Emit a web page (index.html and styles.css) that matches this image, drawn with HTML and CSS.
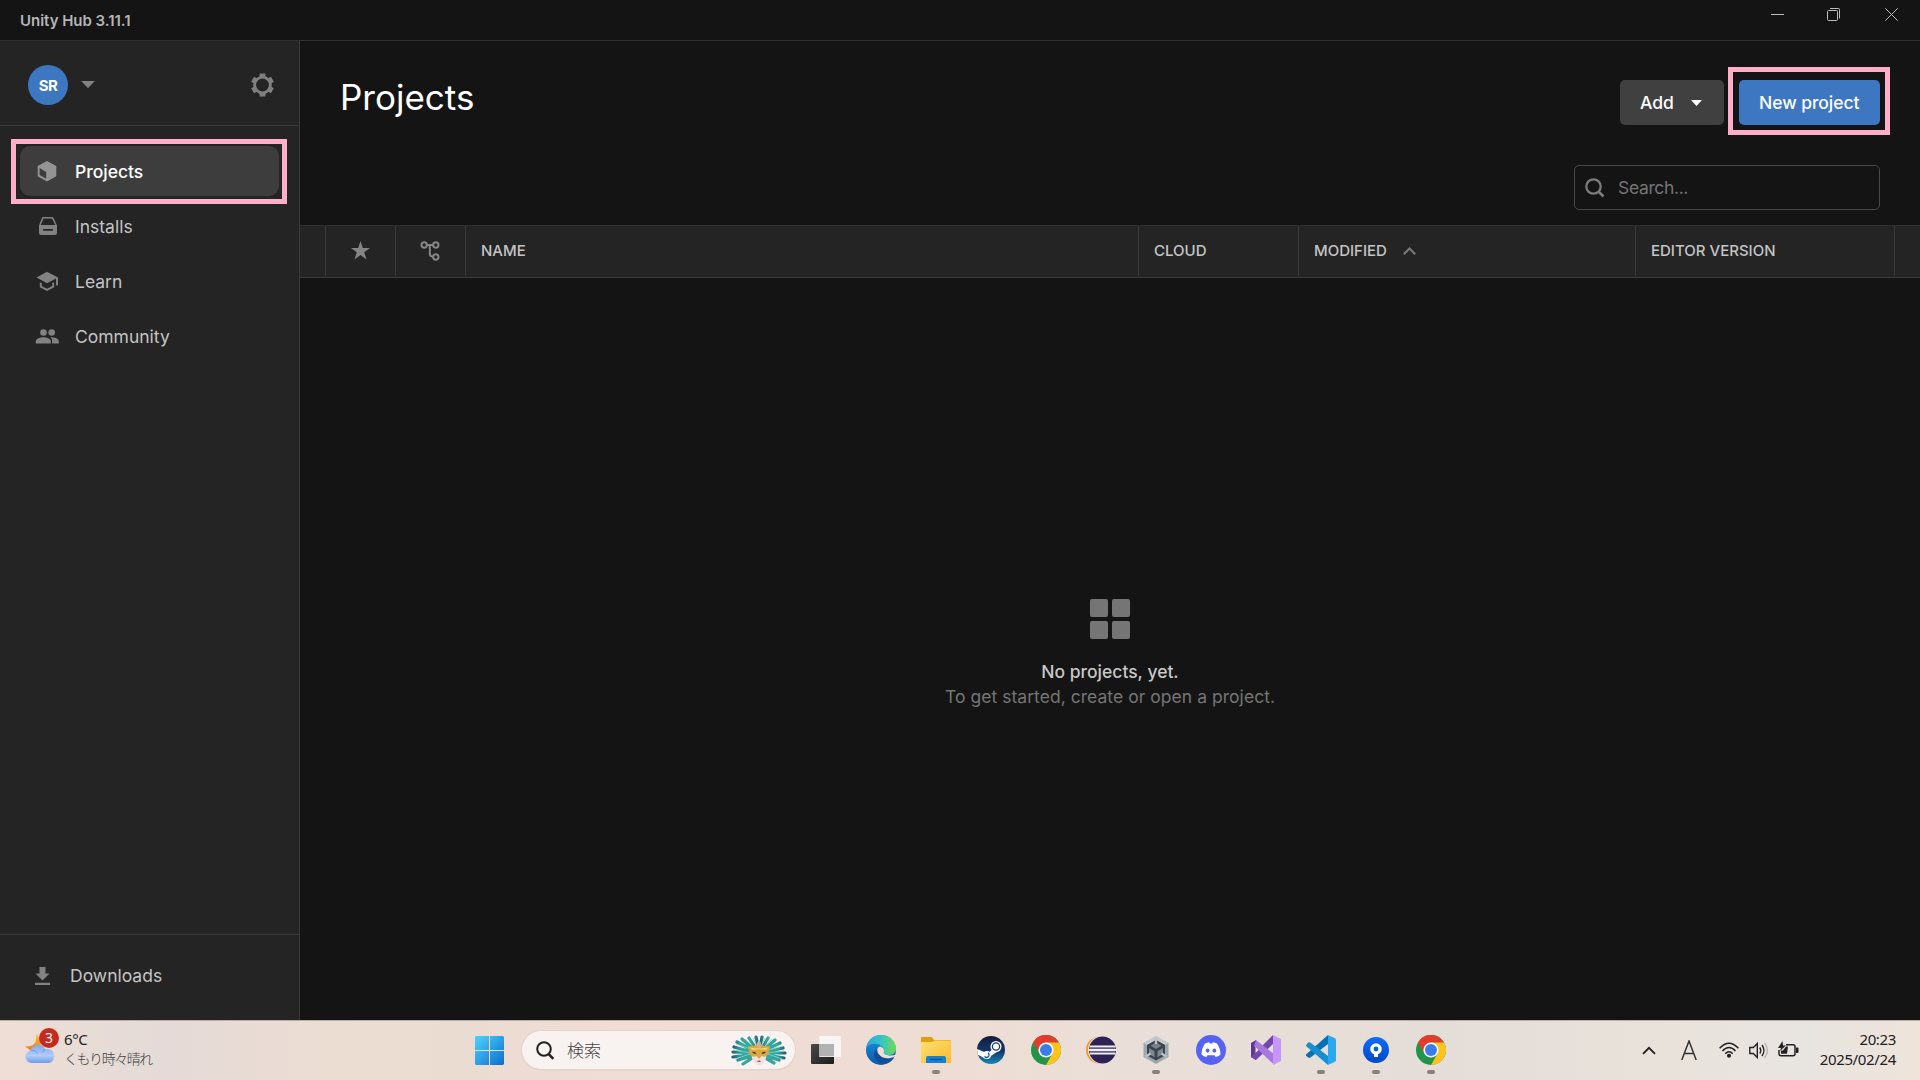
FILE: index.html
```html
<!DOCTYPE html>
<html lang="ja">
<head>
<meta charset="utf-8">
<title>Unity Hub 3.11.1</title>
<link rel="stylesheet" href="styles.css">
</head>
<body>
<svg width="0" height="0" class="defs" aria-hidden="true">
  <defs>
    <linearGradient id="win" x1="0" y1="0" x2="1" y2="1"><stop offset="0" stop-color="#4fd3fb"/><stop offset="1" stop-color="#0a6fd0"/></linearGradient>
    <linearGradient id="edgeTop" x1="0" y1="0" x2="1" y2="0"><stop offset="0" stop-color="#2aa5e0"/><stop offset=".5" stop-color="#34c6c8"/><stop offset="1" stop-color="#6cdc4c"/></linearGradient>
    <linearGradient id="edgeLow" x1="0" y1="0" x2="0" y2="1"><stop offset="0" stop-color="#1c94e0"/><stop offset="1" stop-color="#0c59a4"/></linearGradient>
    <linearGradient id="folder" x1="0" y1="0" x2="1" y2="1"><stop offset="0" stop-color="#ffe07a"/><stop offset="1" stop-color="#fbbb24"/></linearGradient>
    <linearGradient id="steam" x1="0" y1="0" x2="0" y2="1"><stop offset="0" stop-color="#171a3a"/><stop offset=".55" stop-color="#123a6b"/><stop offset="1" stop-color="#1387b8"/></linearGradient>
    <linearGradient id="dark" x1="0" y1="0" x2="1" y2="1"><stop offset="0" stop-color="#4a4a48"/><stop offset="1" stop-color="#1d1d1b"/></linearGradient>
    <linearGradient id="cloud" x1="0" y1="0" x2="0" y2="1"><stop offset="0" stop-color="#7fa8ee"/><stop offset=".6" stop-color="#b1cdf9"/><stop offset="1" stop-color="#6d9be8"/></linearGradient>
    <linearGradient id="moon" x1="0" y1="0" x2="0" y2="1"><stop offset="0" stop-color="#f8bb33"/><stop offset="1" stop-color="#ec8518"/></linearGradient>
    <linearGradient id="feather" x1="0" y1="0" x2="1" y2="0"><stop offset="0" stop-color="#245f78"/><stop offset=".3" stop-color="#35a69e"/><stop offset=".7" stop-color="#35a69e"/><stop offset="1" stop-color="#245f78"/></linearGradient>
    <linearGradient id="source" x1="0" y1="0" x2="0" y2="1"><stop offset="0" stop-color="#0a6bff"/><stop offset="1" stop-color="#0347c8"/></linearGradient>
    <symbol id="chrome" viewBox="0 0 30 30">
      <circle cx="15" cy="15" r="15" fill="#219447"/>
      <path d="M2 7.500A15 15 0 0 1 28 7.500H15L8.600 18.800Z" fill="#e33b2e"/>
      <path d="M28 7.500A15 15 0 0 1 15 30L21.400 18.800 15 7.500Z" fill="#fcc31c"/>
      <circle cx="15" cy="15" r="7.600" fill="#fff"/><circle cx="15" cy="15" r="6" fill="#3b7ced"/>
    </symbol>
  </defs>
</svg>

<header class="titlebar">
  <span class="app-title">Unity Hub 3.11.1</span>
  <div class="window-controls">
    <svg width="13" height="13" viewBox="0 0 13 13"><path d="M0 6.500h13"/></svg>
    <svg width="13" height="13" viewBox="0 0 13 13"><rect x=".5" y="2.500" width="10" height="10" rx="1"/><path d="M3 .5h8.500q1 0 1 1V10.500"/></svg>
    <svg width="13" height="13" viewBox="0 0 13 13"><path d="M.3.3l12.400 12.400M12.700.3L.3 12.700"/></svg>
  </div>
</header>

<div class="app">
  <aside class="sidebar">
    <div class="account">
      <div class="avatar">SR</div>
      <svg class="account-caret" width="14" height="7" viewBox="0 0 14 7"><path d="M0 0h14L7 7z" fill="#828282"/></svg>
      <svg class="gear" width="23" height="24" viewBox="0 0 23 24"><g fill="none" stroke="#808080"><circle cx="11.500" cy="12" r="7.900" stroke-width="2.900"/><path d="M11.500.6v3M11.500 20.400v3M1.600 6.300l2.600 1.500M18.800 16.200l2.600 1.500M1.600 17.700l2.600-1.500M18.800 7.800l2.600-1.500" stroke-width="5.800"/></g></svg>
    </div>
    <nav class="nav">
      <a class="nav-item active">
        <svg width="24" height="24" viewBox="0 0 24 24"><path fill="#949494" fill-rule="evenodd" d="M12 2l9.300 5v10.200L12 22.400l-9.300-5.200V7zM4.600 9v7l6.600 3.700v-6.600z"/></svg>
        <span>Projects</span>
      </a>
      <a class="nav-item">
        <svg width="24" height="24" viewBox="0 0 24 24"><path fill="#828282" fill-rule="evenodd" d="M8 3h9q1.200 0 1.700 1.200L22 11.500V19q0 2-2 2H6q-2 0-2-2v-7.500L6.800 4.200Q7.200 3 8 3zM8.500 4.600L5.800 11h14.500L17 4.600zM9 15q-1 0-1 .9t1 .9h8q1 0 1-.9t-1-.9z"/></svg>
        <span>Installs</span>
      </a>
      <a class="nav-item">
        <svg width="24" height="24" viewBox="0 0 24 24"><path fill="#828282" d="M12 2.800l11 5.600v7.600q-.9 1-2 0V9.500L12 14.200 1.500 8.400z"/><path d="M5.800 13.700v4l6.200 3.200 6.200-3.200v-4" fill="none" stroke="#828282" stroke-width="1.900"/></svg>
        <span>Learn</span>
      </a>
      <a class="nav-item">
        <svg width="24" height="24" viewBox="0 0 24 24"><g fill="#828282" transform="translate(.3 .5)"><circle cx="8.200" cy="8" r="3.300"/><path d="M.5 19v-2.300C.5 14 5.500 12.800 8.200 12.800S15.500 14 15.500 16.700V19z"/><circle cx="16.400" cy="8" r="3.300"/><path d="M16 12.800c3 0 7.500 1.200 7.500 3.900V19h-6.600v-2.300q0-2.300-1.800-3.900z"/></g></svg>
        <span>Community</span>
      </a>
    </nav>
    <div class="downloads">
      <svg width="15" height="18" viewBox="0 0 15 18"><path fill="#828282" d="M4.500 0h6v6.500h4L7.500 13.500.5 6.500h4zM0 15.800h15V18H0z"/></svg>
      <span>Downloads</span>
    </div>
    <div class="marker marker-nav"></div>
  </aside>

  <main class="main">
    <div class="page-head">
      <h1>Projects</h1>
      <div class="actions">
        <button class="btn btn-add">Add<svg width="11" height="6" viewBox="0 0 11 6"><path d="M0 0h11L5.500 6z" fill="#fff"/></svg></button>
        <button class="btn btn-new">New project</button>
      </div>
      <div class="marker marker-new"></div>
    </div>
    <div class="search-row">
      <div class="search">
        <svg width="20" height="20" viewBox="0 0 20 20"><circle cx="8.500" cy="8.500" r="7.200" fill="none" stroke="#7b7b7b" stroke-width="2.300"/><path d="M13.500 13.500l5 5" stroke="#7b7b7b" stroke-width="2.700"/></svg>
        <span>Search...</span>
      </div>
    </div>
    <div class="table-head">
      <div class="cell"></div>
      <div class="cell center"><svg width="19" height="19" viewBox="0 0 19 19"><path fill="#858585" d="M9.500 0l2.300 6.900H19l-5.800 4.400 2.300 7.200-6-4.400-6 4.400 2.300-7.200L0 6.900h7.200z"/></svg></div>
      <div class="cell center"><svg width="20" height="20" viewBox="0 0 20 20" fill="none" stroke="#858585" stroke-width="2"><circle cx="4.200" cy="4" r="2.700"/><circle cx="15.800" cy="4" r="2.700"/><circle cx="15.800" cy="16" r="2.700"/><path d="M7 4h6M9.800 4v8.500q0 3 3.200 3.200" stroke-width="2"/></svg></div>
      <div class="cell">NAME</div>
      <div class="cell">CLOUD</div>
      <div class="cell">MODIFIED<svg class="sort" width="13" height="8" viewBox="0 0 13 8"><path d="M.8 7.200l5.700-5.700 5.700 5.700" fill="none" stroke="#7b7b7b" stroke-width="2"/></svg></div>
      <div class="cell">EDITOR VERSION</div>
      <div class="cell"></div>
    </div>
    <div class="empty">
      <div class="tiles"><i></i><i></i><i></i><i></i></div>
      <strong>No projects, yet.</strong>
      <span>To get started, create or open a project.</span>
    </div>
  </main>
</div>

<footer class="taskbar">
  <div class="weather">
    <div class="weather-icon">
      <svg width="31" height="30" viewBox="0 0 31 30"><path d="M11 0q8 8 3 16H5L0 12.500Q13 13 11 0z" fill="url(#moon)"/><path d="M6.500 29a6.300 6.300 0 0 1-.8-12.500 8 8 0 0 1 14.800-1.200A7 7 0 1 1 24 29z" fill="url(#cloud)"/><path d="M5.500 16.500q5-1 7 3M20.500 15.500q-2 .8-3 3" fill="none" stroke="#6f9ae6"/></svg>
      <span class="badge">3</span>
    </div>
    <div class="weather-text"><span>6°C</span><span class="sub">くもり時々晴れ</span></div>
  </div>
  <div class="dock">
    <svg class="start" width="29" height="29" viewBox="0 0 29 29"><path fill="url(#win)" d="M1 0h13v14H0V1zM15 0h13l1 1v13H15zM0 15h14v14H1l-1-1zM15 15h14v13l-1 1H15z"/></svg>
    <div class="task-search">
      <svg width="18" height="19" viewBox="0 0 18 19" fill="none" stroke="#222"><circle cx="8" cy="8" r="6.800" stroke-width="2"/><path d="M12.500 12.800l4.800 5" stroke-width="2.500"/></svg>
      <span>検索</span>
      <svg class="mask" width="58" height="32" viewBox="0 0 58 32">
        <g fill="none" stroke="url(#feather)" stroke-width="3.200" stroke-linecap="round"><path d="M29 18L26 3M28 18L19 4M27 18L12 5M26 18L7 8M25 19L4 13M25 19L3 18M25 20L3 23M26 21L8 26M27 21L13 30"/><path d="M29 18L32 3M30 18L38 4M31 18L45 6M31 18L50 9M31 19L53 14M31 19L55 19M31 20L54 24M31 21L49 26M30 21L44 29"/></g>
        <path d="M23 4l4 8M35 4l-4 8M15 5l10 9M42 5l-9 9M6 10l18 6M52 12l-17 5M3 16l18 3M54 17l-17 2M5 25l15-5M52 25l-14-5" fill="none" stroke="#8bd3c8" stroke-width=".8"/>
        <path d="M20.500 17q8.500-2 17 0l-2 9q-3 5.500-6.500 5.500t-6.500-5.500z" fill="#efe4e4"/>
        <path d="M18 12q6 1 8.500-1.500L29 8l2.500 2.500Q34 13 40 12l-1.500 8q-2.500 4-7 2L29 25l-2.500-3q-4.500 2-7-2z" fill="#dca83d"/><path d="M20 13.500q9 2 18 0l-2 2.500q-7-1.500-14 0z" fill="#f8d672"/>
        <path d="M22 18q2.500-1 4.500 1.500-3 .8-4.500-1.500zM36 18q-2.500-1-4.500 1.500 3 .8 4.500-1.500z" fill="#293741"/><path d="M26.800 27q2.200-1.200 4.400 0-2.200 2.200-4.400 0z" fill="#d32735"/><ellipse cx="29" cy="10.500" rx="2" ry="3.500" fill="#c9b19a"/>
      </svg>
    </div>
    <div class="task"><svg width="30" height="30" viewBox="0 0 30 30"><rect y="9" width="23" height="20" rx="1" fill="url(#dark)"/><rect x="8" y="1" width="22" height="21" rx="1" fill="#f8f8f8" opacity=".9"/><path d="M8 9h15v12H8z" fill="#b2b2b2"/></svg></div>
    <div class="task"><svg width="30" height="30" viewBox="0 0 30 30"><circle cx="15" cy="15" r="15" fill="url(#edgeLow)"/><path d="M.5 12C2 4.500 8 0 15 0c8.500 0 15 6 15 13.500 0 4-3 6.500-7 6.500-4 0-6.500-1.500-5.500-3.200 2-2.500-.5-5.300-4.500-7.300Q6 7 .5 12z" fill="url(#edgeTop)"/><path d="M12 13q-6 4-3 10 4 7 12 5 4-1 7-5-7 2.500-12-1t-4-9z" fill="#0f4f99"/><path d="M17.500 13.500q-4-4-6 0-1 4 2 6.500 4 4 10.500 3 4-.5 7-2.500V19q-4 2-9 1.200-6-1-3.700-4z" fill="#eeded6"/></svg></div>
    <div class="task open"><svg width="30" height="30" viewBox="0 0 30 30"><path d="M0 3q0-1 1-1h9q1 0 1.500.7L13 5h16q1 0 1 1v6H0z" fill="#e0a008"/><path d="M0 8q0-1 1-1h10l3-1.500h15q1 0 1 1V28H0z" fill="url(#folder)"/><path d="M5 28v-5q0-2 2-2h16q2 0 2 2v5z" fill="#1581d3"/><path d="M9 24.500h12" stroke="#0d4d94" stroke-width="1.300"/></svg></div>
    <div class="task"><svg width="30" height="30" viewBox="0 0 30 30"><circle cx="15" cy="15" r="14" fill="url(#steam)"/><path d="M1 14l11 4.500 4.500-4.500L19 10l5 5-8.500 5.500L9 23.500l-7.500-4z" fill="#fff"/><circle cx="20" cy="11.500" r="5.500" fill="#fff"/><circle cx="20" cy="11.500" r="3.600" fill="#fff" stroke="#173d6e" stroke-width="1.300"/><circle cx="11" cy="20" r="4" fill="#fff"/><path d="M8.500 21.500q2 2 4 0 1.500-2-.5-3.700" fill="none" stroke="#1b5e91" stroke-width="1.200"/></svg></div>
    <div class="task"><svg width="30" height="30"><use href="#chrome"/></svg></div>
    <div class="task"><svg width="30" height="30" viewBox="0 0 30 30"><circle cx="13.300" cy="15" r="13.300" fill="#f4962a"/><circle cx="16" cy="15" r="14" fill="#eee3dc"/><circle cx="16.500" cy="15" r="13.500" fill="#2c2255"/><path d="M3.700 11.500h25.800M3 15h27M3.700 18.500h25.800" stroke="#f0f0f7" stroke-width="2"/><path d="M4 13.200h25M4 16.800h25" stroke="#8175a9" stroke-width="1"/></svg></div>
    <div class="task open"><svg width="30" height="30" viewBox="0 0 30 30"><path d="M15 1l12.500 7v14L15 29 2.500 22V8z" fill="#9da7ae"/><path d="M15 1l12.500 7L24 10 15 5l-9 5-3.500-2z" fill="#c5ccd1"/><path d="M15 5l9 5v10.500L15 25.500l-9-5V10z" fill="#3b444b"/><path d="M15 7.500l5.500 3.200L15 14l-5.500-3.300z" fill="#78838b"/><path d="M8 13l5.500 3.200v6L8 19zM22 13l-5.500 3.200v6L22 19z" fill="#7d888f"/><path d="M13.800 2.500h2.400V9h-2.400zM4 20.500l5-3 1.200 2-5 3zM26 20.500l-5-3-1.200 2 5 3z" fill="#bac3c9"/></svg></div>
    <div class="task"><svg width="30" height="30" viewBox="0 0 30 30"><circle cx="15" cy="15" r="15" fill="#5663f2"/><path d="M9 8.500q2-1 4-1.300l.8 1.300h2.400l.8-1.300q2 .3 4 1.300 3.500 5 3.500 11-2.200 2-5 2.500l-1-1.800h-7l-1 1.800q-2.800-.5-5-2.500Q5.500 13.500 9 8.500z" fill="#fff"/><ellipse cx="11.600" cy="15.600" rx="1.900" ry="2.100" fill="#5663f2"/><ellipse cx="18.400" cy="15.600" rx="1.900" ry="2.100" fill="#5663f2"/></svg></div>
    <div class="task"><svg width="30" height="30" viewBox="0 0 30 30"><path d="M0 8l5-3v20l-5-3z" fill="#5c3a91"/><path d="M0 22L22 0v9L5 25z" fill="#7248ac"/><path d="M5 5l18 14v10.500L3 11z" fill="#a678df"/><path d="M22 0l8 4v22l-8 4z" fill="#c896fb"/><path d="M4.500 12v6l3-3z" fill="#eaded9"/></svg></div>
    <div class="task open"><svg width="30" height="30" viewBox="0 0 30 30"><path d="M0 19.500L22 0v9L4.500 22.500q-1.500 1-3-.4L0 20.500z" fill="#0870b5"/><path d="M0 10.500L1.500 8Q3 6.500 4.500 7.800L22 21v9L0 11z" fill="#168fd1"/><path d="M22 0l7 3.300q1 .6 1 1.700v20q0 1.200-1 1.700L22 30z" fill="#2aa9ee"/></svg></div>
    <div class="task open"><svg width="30" height="30" viewBox="0 0 30 30"><circle cx="15" cy="15" r="13" fill="url(#source)"/><circle cx="15" cy="14" r="4.100" fill="none" stroke="#fff" stroke-width="3.400"/><path d="M13 17h4v5h-4z" fill="#fff"/></svg></div>
    <div class="task open"><svg width="30" height="30"><use href="#chrome"/></svg></div>
  </div>
  <div class="tray">
    <svg width="14" height="9" viewBox="0 0 14 9"><path d="M1 7.800l6-6 6 6" fill="none" stroke="#222" stroke-width="1.900"/></svg>
    <svg class="ime" width="16" height="20" viewBox="0 0 16 20"><path d="M.8 20L8 1l7.200 19M3.300 13.500h9.400" fill="none" stroke="#333" stroke-width="1.500"/></svg>
    <svg class="wifi" width="20" height="16" viewBox="0 0 20 16" fill="none" stroke="#222" stroke-width="1.500"><path d="M.6 6.200q9.400-10 18.800 0M3.500 9q6.500-7 13 0M6.300 11.700q3.700-4 7.400 0"/><circle cx="10" cy="13.800" r="1.300" fill="#222"/></svg>
    <svg class="volume" width="20" height="17" viewBox="0 0 20 17" fill="none" stroke="#222" stroke-width="1.400"><path d="M.8 5.500h3.500l4-4v14l-4-4H.8z"/><path d="M10.800 5.500q2 3 0 6M13 3q4 5.500 0 11"/><path d="M15.500 1q6 7.500 0 15" stroke="#bbb5b2"/></svg>
    <svg class="battery" width="21" height="16" viewBox="0 0 21 16"><path d="M8 3.800h7q2 0 2 2v7q0 2-2 2H3q-2 0-2-2V9" fill="none" stroke="#222" stroke-width="1.500"/><path d="M18 6.500h1.500q1 0 1 1v3.500q0 1-1 1H18zM3 12.800V9.500h2l3-4h2l-1 7.300zM4.500 0L0 7h3L2 10l6-5.500H5z" fill="#222"/></svg>
    <div class="clock"><span>20:23</span><span>2025/02/24</span></div>
  </div>
</footer>
</body>
</html>
```
FILE: styles.css
```css
* { box-sizing: border-box; }

body {
  margin: 0;
  width: 1920px;
  height: 1080px;
  overflow: hidden;
  display: grid;
  grid-template-rows: 41px 979px 60px;
  background: #141414;
  color: #c4c4c4;
  font-family: Inter, "Liberation Sans", sans-serif;
  font-size: 17.5px;
}

svg { display: block; flex: none; }
.defs { position: absolute; }

.titlebar {
  display: flex;
  justify-content: space-between;
  align-items: center;
  padding: 0 22px 0 20px;
  border-bottom: 1px solid #303030;
}
.app-title { font-size: 15px; font-weight: 600; letter-spacing: -.03px; color: #b5b5b5; }
.window-controls { display: flex; gap: 45px; align-self: flex-start; padding-top: 8px; }
.window-controls svg { fill: none; stroke: #bcbcbc; stroke-width: 1; }
.window-controls svg:first-child { margin-right: -2px; }

.app { display: grid; grid-template-columns: 300px 1fr; }

.sidebar {
  position: relative;
  display: flex;
  flex-direction: column;
  background: #242424;
  border-right: 1px solid #3a3a3a;
}
.account {
  display: flex;
  align-items: center;
  height: 85px;
  padding: 3px 25px 0 28px;
  border-bottom: 1px solid #3a3a3a;
}
.avatar {
  width: 40px;
  height: 40px;
  border-radius: 50%;
  background: #3d77c2;
  color: #fff;
  font-size: 15px;
  font-weight: 700;
  line-height: 41px;
  text-align: center;
  letter-spacing: -.5px;
}
.account-caret { margin-left: 13px; }
.gear { margin-left: auto; }

.nav { flex: 1; display: flex; flex-direction: column; gap: 5px; padding: 20px; }
.nav-item {
  display: flex;
  align-items: center;
  gap: 16px;
  height: 50px;
  padding-left: 15px;
  border-radius: 10px;
}
.nav-item.active { background: #3d3d3d; color: #fff; font-weight: 500; }
.downloads {
  display: flex;
  align-items: center;
  gap: 20px;
  height: 86px;
  padding: 0 0 4px 35px;
  border-top: 1px solid #3a3a3a;
}

.marker { position: absolute; border: 5px solid #ffaec9; pointer-events: none; }
.marker-nav { left: 11px; top: 98px; width: 276px; height: 65px; }
.marker-new { right: 30px; top: 26px; width: 162px; height: 68px; }

.main { display: flex; flex-direction: column; }
.page-head {
  position: relative;
  display: flex;
  justify-content: space-between;
  height: 124px;
  padding: 34px 40px 0;
}
h1 { margin: 0; color: #fff; font-size: 35px; font-weight: 400; line-height: 45px; }
.actions { display: flex; gap: 15px; padding-top: 5px; }
.btn {
  display: flex;
  align-items: center;
  height: 45px;
  padding: 0 20px;
  border: 0;
  border-radius: 5px;
  color: #fff;
  font: 500 17.5px Inter, sans-serif;
}
.btn-add { width: 104px; gap: 17px; background: #404040; }
.btn-new { width: 141px; background: #3d77c2; white-space: nowrap; letter-spacing: -.05px; }

.search-row { display: flex; justify-content: flex-end; height: 60px; padding-right: 40px; }
.search {
  display: flex;
  align-items: center;
  gap: 13px;
  width: 306px;
  height: 45px;
  padding-left: 10px;
  border: 1px solid #484848;
  border-radius: 5px;
  color: #757575;
}
.search span { letter-spacing: -.35px; }

.table-head {
  display: grid;
  grid-template-columns: 26px 70px 70px 673px 160px 337px 259px 1fr;
  height: 53px;
  padding-bottom: 1px;
  border-top: 1px solid #303030;
  border-bottom: 1px solid #3a3a3a;
  background: #242424;
}
.cell {
  display: flex;
  align-items: center;
  padding: 0 0 2px 15px;
  border-right: 1px solid #3a3a3a;
  font-size: 15px;
  font-weight: 500;
}
.cell:last-child { border-right: 0; }
.cell.center { justify-content: center; padding: 0 1px 0 0; }
.cell.center:nth-child(2) { padding-bottom: 2px; }
.sort { margin-left: 16px; margin-top: 2px; }

.empty {
  flex: 1;
  display: flex;
  flex-direction: column;
  align-items: center;
  padding-top: 321px;
  color: #757575;
  line-height: 25px;
}
.empty span { letter-spacing: .04px; }
.tiles { display: grid; grid-template-columns: 18px 18px; gap: 4px; margin-bottom: 20px; }
.tiles i { width: 18px; height: 18px; border-radius: 2px; background: #757575; }
.empty strong { font-weight: 500; color: #c8c8c8; }

.taskbar {
  display: grid;
  grid-template-columns: 475px 1fr 280px;
  border-top: 1px solid #b9aea8;
  background: linear-gradient(90deg, #efded5 0, #e5dbd7 7%, #e5dad7 9%, #ecddd3 17%, #ebdcd2 25%, #f0ddd5 32%, #eeddd4 50%, #e9dfd8 60%, #e5ddd7 75%, #e9e3dc 88%, #e8e4e0 94%, #eee4da 100%);
  color: #222;
  font-family: "Noto Sans", "Noto Sans CJK JP", sans-serif;
}
.weather { display: flex; padding: 6px 0 0 25px; gap: 8px; }
.weather-icon { position: relative; width: 31px; padding-top: 7px; }
.badge {
  position: absolute;
  left: 14px;
  top: 1px;
  width: 20px;
  height: 20px;
  border-radius: 50%;
  background: #c62a1c;
  color: #fff;
  font-size: 14px;
  line-height: 20px;
  text-align: center;
}
.weather-text { display: flex; flex-direction: column; font-size: 15px; line-height: 20px; padding-top: 2px; letter-spacing: -.4px; }
.weather-text .sub { margin-top: -1px; font-family: "Noto Sans CJK JP", sans-serif; font-size: 14px; font-weight: 300; color: #444; letter-spacing: -1.45px; white-space: nowrap; }

.dock { display: flex; align-items: center; padding-bottom: 1px; }
.start { margin-top: 1px; }
.task-search {
  display: flex;
  align-items: center;
  width: 273px;
  height: 38px;
  margin: 0 3px 0 18px;
  padding: 0 7px 0 14px;
  border-radius: 19px;
  background: #f8f3f1;
  box-shadow: 0 0 0 1px #e4d3ca, 0 1px 1px #bfafaa;
}
.task-search span { margin: -2px 0 0 13px; font: 300 17px "Noto Sans CJK JP", sans-serif; color: #444; }
.mask { margin-left: auto; }
.task { position: relative; flex: none; display: flex; justify-content: center; width: 55px; }
.task.open::after {
  content: "";
  position: absolute;
  left: 24px;
  top: 35px;
  width: 8px;
  height: 4px;
  border-radius: 2px;
  background: #87807c;
}

.tray { display: flex; align-items: center; justify-content: flex-end; padding-right: 24px; padding-bottom: 1px; }
.ime { margin-left: 25px; }
.wifi { margin-left: 22px; }
.volume { margin-left: 10px; }
.battery { margin: -2px 0 0 9px; }
.clock { display: flex; flex-direction: column; align-items: flex-end; width: 97px; margin-top: -2px; font-size: 15px; line-height: 20px; letter-spacing: -.35px; }
```
